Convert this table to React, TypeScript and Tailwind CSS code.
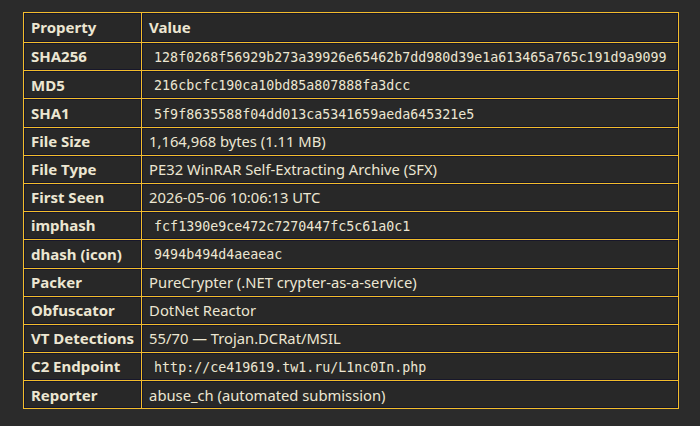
const rows: { k: string; v: string; mono?: boolean }[] = [
  { k: "SHA256", v: "128f0268f56929b273a39926e65462b7dd980d39e1a613465a765c191d9a9099", mono: true },
  { k: "MD5", v: "216cbcfc190ca10bd85a807888fa3dcc", mono: true },
  { k: "SHA1", v: "5f9f8635588f04dd013ca5341659aeda645321e5", mono: true },
  { k: "File Size", v: "1,164,968 bytes (1.11 MB)" },
  { k: "File Type", v: "PE32 WinRAR Self-Extracting Archive (SFX)" },
  { k: "First Seen", v: "2026-05-06 10:06:13 UTC" },
  { k: "imphash", v: "fcf1390e9ce472c7270447fc5c61a0c1", mono: true },
  { k: "dhash (icon)", v: "9494b494d4aeaeac", mono: true },
  { k: "Packer", v: "PureCrypter (.NET crypter-as-a-service)" },
  { k: "Obfuscator", v: "DotNet Reactor" },
  { k: "VT Detections", v: "55/70 — Trojan.DCRat/MSIL" },
  { k: "C2 Endpoint", v: "http://ce419619.tw1.ru/L1nc0In.php", mono: true },
  { k: "Reporter", v: "abuse_ch (automated submission)" },
]

// yellow grid line with a thin dark edge inside every cell
const cell = "border border-[#f2bd2c] px-[7px] shadow-[inset_0_0_0_1px_#17172b] align-middle bg-[#282828]"

export default function App() {
  return (
    <div className="w-[700px] h-[426px] bg-[#2b2b2b] pt-[12px] pl-[23px] text-[#ece6d2] font-['Noto_Sans',sans-serif] text-[15px]">
      <table className="border-collapse w-[656px]">
        <thead>
          <tr className="h-[30px]">
            <th className={`${cell} w-[118px] text-left font-bold`}>Property</th>
            <th className={`${cell} text-left font-bold`}>Value</th>
          </tr>
        </thead>
        <tbody>
          {rows.map((r) => (
            <tr key={r.k} className="h-[28.2px]">
              <td className={`${cell} font-bold whitespace-nowrap`}>{r.k}</td>
              <td className={`${cell} whitespace-nowrap text-[14.75px]`}>
                {r.mono ? (
                  <code className="font-['DejaVu_Sans_Mono',monospace] text-[13.3px] px-[5px]">{r.v}</code>
                ) : (
                  r.v
                )}
              </td>
            </tr>
          ))}
        </tbody>
      </table>
    </div>
  )
}
